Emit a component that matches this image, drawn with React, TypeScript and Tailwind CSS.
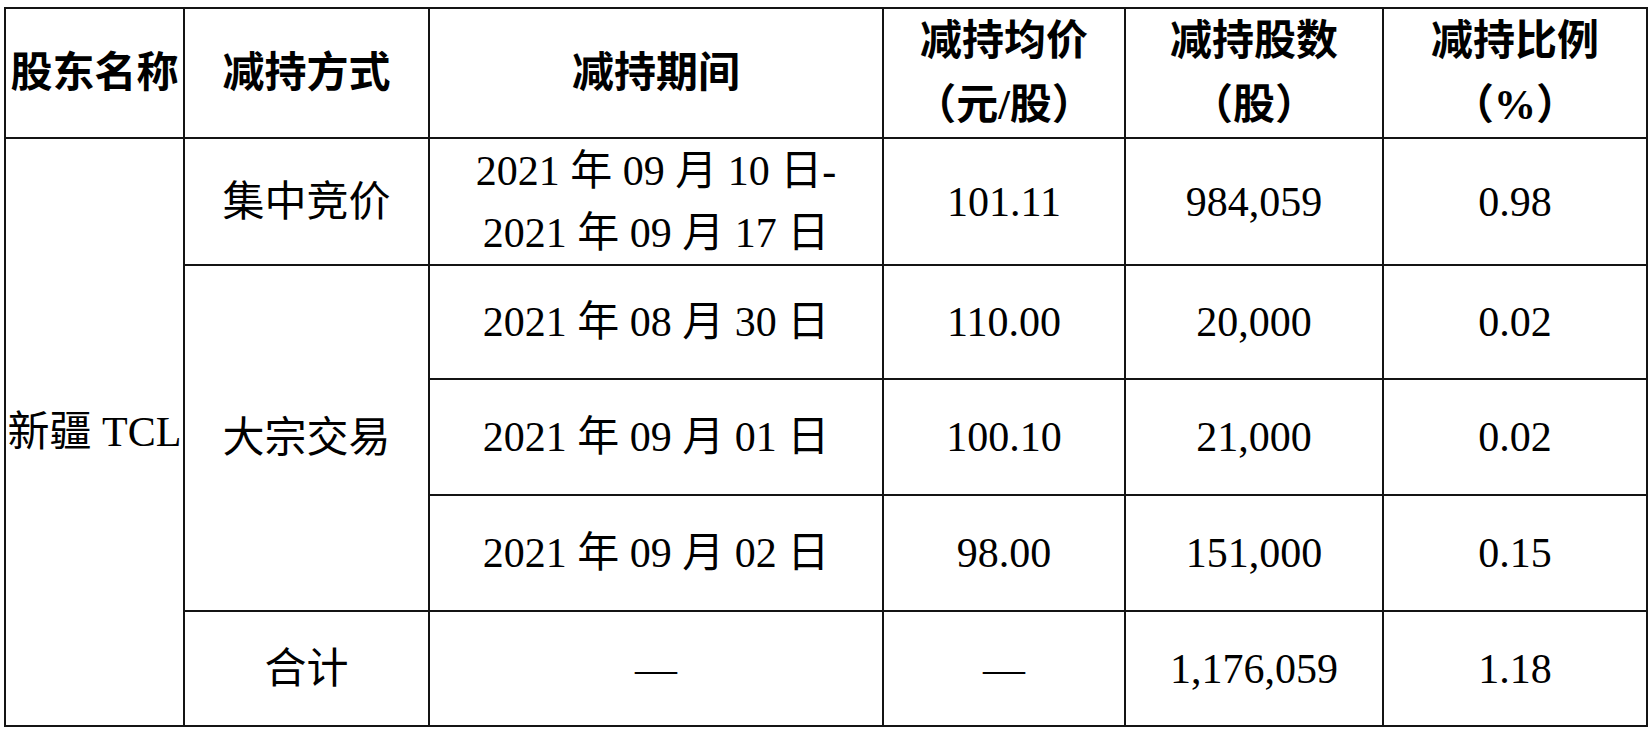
import React from 'react';

// ─── Data ─────────────────────────────────────────────────────

interface TradeRow {
    period: string[];
    price: string;
    shares: string;
    ratio: string;
    height: string;
}

const block: TradeRow[] = [
    { period: ['2021 年 08 月 30 日'], price: '110.00', shares: '20,000', ratio: '0.02', height: 'h-[114px]' },
    { period: ['2021 年 09 月 01 日'], price: '100.10', shares: '21,000', ratio: '0.02', height: 'h-[116px]' },
    { period: ['2021 年 09 月 02 日'], price: '98.00', shares: '151,000', ratio: '0.15', height: 'h-[116px]' },
];

const cell = 'border-2 border-[#141414] p-0 text-center align-middle';

// ─── Component ────────────────────────────────────────────────

export default function App() {
    return (
        <div
            className="min-h-[730px] w-[1652px] bg-white pl-[4px] pt-[7px] text-[42px] leading-[62px] text-black"
            style={{ fontFamily: '"Liberation Serif", "Noto Sans CJK SC", serif' }}
        >
            <table className="w-[1644px] table-fixed border-collapse">
                <colgroup>
                    <col className="w-[179px]" />
                    <col className="w-[245px]" />
                    <col className="w-[454px]" />
                    <col className="w-[242px]" />
                    <col className="w-[258px]" />
                    <col className="w-[264px]" />
                </colgroup>
                <thead>
                    <tr className="h-[127px] font-bold leading-[64px]">
                        <th className={cell}>股东名称</th>
                        <th className={cell}>减持方式</th>
                        <th className={cell}>减持期间</th>
                        <th className={cell}>
                            <div>减持均价</div>
                            <div>（元/股）</div>
                        </th>
                        <th className={cell}>
                            <div>减持股数</div>
                            <div>（股）</div>
                        </th>
                        <th className={cell}>
                            <div>减持比例</div>
                            <div>（%）</div>
                        </th>
                    </tr>
                </thead>
                <tbody>
                    <tr className="h-[127px]">
                        <td className={cell} rowSpan={5}>
                            <span className="whitespace-nowrap">新疆 TCL</span>
                        </td>
                        <td className={cell}>集中竞价</td>
                        <td className={cell}>
                            <div>2021 年 09 月 10 日-</div>
                            <div>2021 年 09 月 17 日</div>
                        </td>
                        <td className={cell}>101.11</td>
                        <td className={cell}>984,059</td>
                        <td className={cell}>0.98</td>
                    </tr>
                    {block.map((row, i) => (
                        <tr key={row.price} className={row.height}>
                            {i === 0 && (
                                <td className={cell} rowSpan={3}>
                                    大宗交易
                                </td>
                            )}
                            <td className={cell}>{row.period}</td>
                            <td className={cell}>{row.price}</td>
                            <td className={cell}>{row.shares}</td>
                            <td className={cell}>{row.ratio}</td>
                        </tr>
                    ))}
                    <tr className="h-[115px]">
                        <td className={cell}>合计</td>
                        <td className={cell}>—</td>
                        <td className={cell}>—</td>
                        <td className={cell}>1,176,059</td>
                        <td className={cell}>1.18</td>
                    </tr>
                </tbody>
            </table>
        </div>
    );
}
